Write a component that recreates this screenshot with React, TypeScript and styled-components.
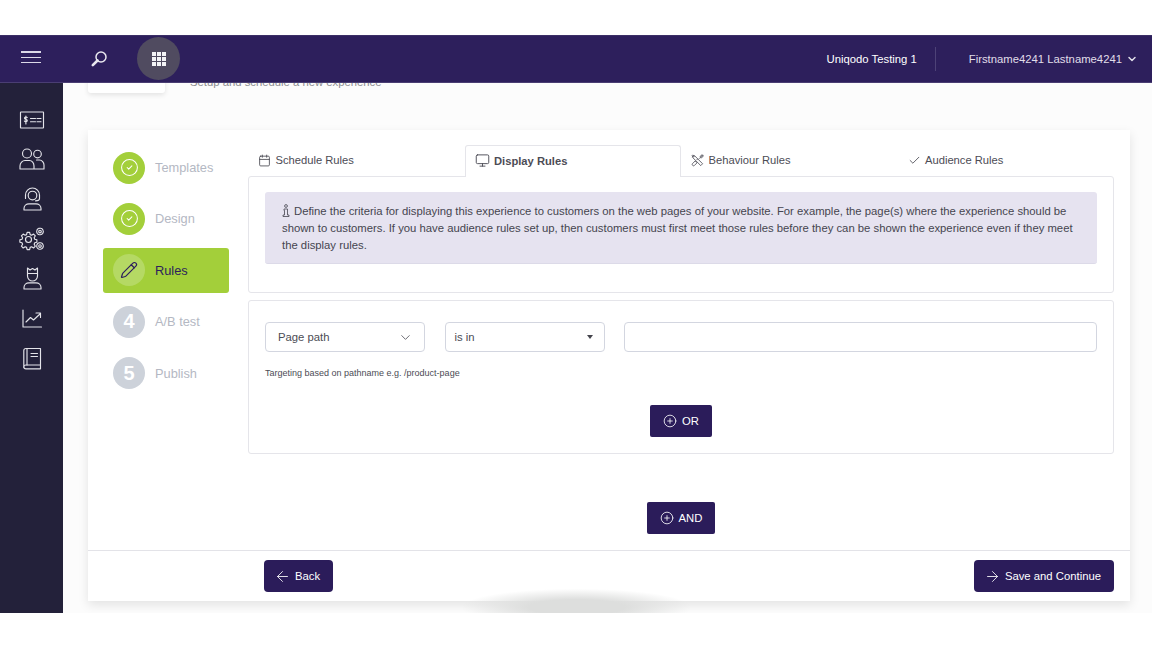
import React from 'react';
import styled, { createGlobalStyle } from 'styled-components';
import {
    ArrowLeft,
    ArrowRight,
    Calendar,
    Check,
    ChevronDown,
    CircleCheck,
    CirclePlus,
    Monitor,
    Pencil,
} from 'lucide-react';

const GlobalStyle = createGlobalStyle`
    html, body {
        margin: 0;
        padding: 0;
        background: #fff;
    }
    body {
        font-family: "Liberation Sans", Arial, sans-serif;
        overflow: hidden;
    }
    * {
        box-sizing: border-box;
    }
`;

const Page = styled.div`
    width: 1152px;
    height: 648px;
    padding: 35px 0;
    background: #fff;
`;
const Shell = styled.div`
    height: 578px;
    display: flex;
    flex-direction: column;
`;
const Header = styled.header`
    height: 47.5px;
    flex: none;
    display: flex;
    align-items: center;
    background: #2d1f5c;
    border-top: 1px solid #3b2f66;
    border-bottom: 1px solid #4a3e73;
    color: #fff;
    font-size: 11.3px;
    position: relative;
    z-index: 2;
`;
const Burger = styled.div`
    width: 20px;
    margin-left: 21px;
    padding-bottom: 3px;
    display: flex;
    flex-direction: column;
    gap: 3.8px;
    > i {
        display: block;
        height: 1.5px;
        background: #dcd9e8;
    }
`;
const SearchIcon = styled.div`
    width: 20px;
    height: 20px;
    margin-left: 48px;
    color: #e9e8ef;
    display: flex;
`;
const GridButton = styled.div`
    width: 43px;
    height: 43px;
    margin-left: 28px;
    border-radius: 50%;
    background: #504b60;
    display: grid;
    grid-template-columns: repeat(3, 4px);
    grid-auto-rows: 4px;
    gap: 1px;
    justify-content: center;
    align-content: center;
    > i {
        display: block;
        background: #f4f4f6;
    }
`;
const HeaderRight = styled.div`
    margin-left: auto;
    display: flex;
    align-items: center;
    padding-right: 14px;
    color: #e0dee9;
`;
const Account = styled.span`
    color: #fff;
    padding-right: 18px;
    border-right: 1px solid #4d4277;
    line-height: 24px;
    margin-right: 33px;
`;
const UserChevron = styled(ChevronDown)`
    margin-left: 4px;
`;
const Body = styled.div`
    flex: 1;
    min-height: 0;
    display: flex;
`;
const Sidebar = styled.nav`
    width: 63px;
    flex: none;
    background: #23213a;
    padding-top: 24px;
    display: flex;
    flex-direction: column;
    align-items: center;
    gap: 13.7px;
    color: #e4e4ea;
`;
const Main = styled.main`
    flex: 1;
    min-width: 0;
    overflow: hidden;
    display: flex;
    flex-direction: column;
    justify-content: flex-end;
    padding: 0 22px 12px 25px;
    background: #fcfcfc;
`;
const TitleRow = styled.div`
    flex: none;
    display: flex;
    align-items: flex-end;
    gap: 25px;
    margin-bottom: 37px;
`;
const GhostButton = styled.div`
    width: 77px;
    height: 40px;
    background: #fff;
    border-radius: 3px;
    box-shadow: 0 2px 5px rgba(0, 0, 0, 0.1);
`;
const Subtitle = styled.div`
    font-size: 11.3px;
    line-height: 14px;
    padding-bottom: 4px;
    color: #8d8d92;
`;
const Card = styled.section`
    flex: none;
    height: 471px;
    background: #fff;
    box-shadow: 0 4px 10px rgba(0, 0, 0, 0.1);
    display: flex;
    flex-direction: column;
    position: relative;
    &::after {
        content: '';
        position: absolute;
        left: 375px;
        bottom: -16px;
        width: 227px;
        height: 28px;
        background: radial-gradient(ellipse at 50% 65%, #dddedd 30%, rgba(232, 233, 232, 0) 72%);
        pointer-events: none;
    }
`;
const CardBody = styled.div`
    flex: 1;
    min-height: 0;
    display: flex;
`;
const Steps = styled.ol`
    width: 160px;
    flex: none;
    margin: 0;
    padding: 15px 19px 0 15px;
    list-style: none;
    display: flex;
    flex-direction: column;
    gap: 6.4px;
`;
const Step = styled.li<{ $active?: boolean }>`
    height: 45px;
    display: flex;
    align-items: center;
    gap: 10px;
    padding-left: 10px;
    border-radius: 3px;
    font-size: 12.8px;
    background: ${(p) => (p.$active ? '#a3cf3a' : 'transparent')};
    color: ${(p) => (p.$active ? '#2d1f5c' : '#b4b8c3')};
`;
const StepCircle = styled.span<{ $tone: 'done' | 'current' | 'todo' }>`
    width: 32px;
    height: 32px;
    flex: none;
    border-radius: 50%;
    display: flex;
    align-items: center;
    justify-content: center;
    font-size: 20px;
    font-weight: 700;
    color: ${(p) => (p.$tone === 'current' ? '#2d1f5c' : '#fff')};
    background: ${(p) =>
        p.$tone === 'done'
            ? '#a3cf3a'
            : p.$tone === 'current'
              ? '#b5d964'
              : '#cdd2da'};
`;
const Content = styled.div`
    flex: 1;
    min-width: 0;
    padding: 15px 16px 0 0;
    display: flex;
    flex-direction: column;
    align-items: stretch;
`;
const Tabs = styled.div`
    height: 31px;
    flex: none;
    display: grid;
    grid-template-columns: repeat(4, 1fr);
`;
const Tab = styled.div<{ $active?: boolean }>`
    display: flex;
    align-items: center;
    gap: 4.5px;
    padding: 0 0 2px 9px;
    font-size: 11.2px;
    color: #4c4c55;
    border: 1px solid ${(p) => (p.$active ? '#e5e5ea' : 'transparent')};
    border-bottom: none;
    border-radius: 3px 3px 0 0;
    font-weight: ${(p) => (p.$active ? 700 : 400)};
    background: #fff;
    position: relative;
    z-index: 1;
    margin-bottom: ${(p) => (p.$active ? '-1px' : '0')};
`;
const Panel = styled.div<{ $tall?: boolean }>`
    border: 1px solid #e5e5ea;
    border-radius: 3px;
    height: ${(p) => (p.$tall ? '154px' : '117px')};
    padding: ${(p) => (p.$tall ? '21px' : '15px')} 16px 0;
    flex: none;
`;
const Alert = styled.div`
    height: 72px;
    padding: 11px 12px 0 17px;
    background: #e6e3f0;
    border-radius: 3px;
    border-bottom: 1px solid #dcdae8;
    font-size: 11.3px;
    line-height: 17px;
    color: #45454f;
`;
const InfoMark = styled.svg`
    width: 8px;
    height: 13px;
    margin-right: 4px;
    vertical-align: -2px;
`;
const Fields = styled.div`
    display: grid;
    grid-template-columns: 160px 160px 1fr;
    gap: 19.5px;
`;
const SelectBox = styled.div<{ $inset?: boolean }>`
    height: 30px;
    display: flex;
    align-items: center;
    justify-content: space-between;
    padding: 0 11px 0 ${(p) => (p.$inset ? '12px' : '9px')};
    border: 1px solid #d3d6e0;
    border-radius: 4px;
    background: #fff;
    font-size: 11.3px;
    color: #4c4c55;
`;
const Caret = styled.span`
    width: 0;
    height: 0;
    border-left: 3.5px solid transparent;
    border-right: 3.5px solid transparent;
    border-top: 4px solid #44444c;
`;
const TextField = styled.input`
    height: 30px;
    width: 100%;
    border: 1px solid #d3d6e0;
    border-radius: 4px;
    background: #fff;
    outline: none;
`;
const Hint = styled.div`
    margin-top: 15px;
    font-size: 9px;
    line-height: 12px;
    color: #4c4c55;
`;
const ButtonRow = styled.div<{ $gap: number }>`
    display: flex;
    justify-content: center;
    margin-top: ${(p) => p.$gap}px;
`;
const PrimaryButton = styled.button<{ $round?: boolean }>`
    height: 32px;
    padding: 0 13px;
    display: inline-flex;
    align-items: center;
    gap: 5px;
    border: none;
    border-radius: ${(p) => (p.$round ? '4px' : '2px')};
    background: #2b1c5a;
    color: #fff;
    font-family: inherit;
    font-size: 11.3px;
`;
const BackArrow = styled(ArrowLeft)`
    margin: 0 -1px 0 -3px;
`;
const NextArrow = styled(ArrowRight)`
    margin: 0 -1px 0 -3px;
`;
const Gap = styled.div`
    height: 7px;
    flex: none;
`;
const Footer = styled.footer`
    height: 51px;
    flex: none;
    border-top: 1px solid #e3e3e8;
    display: flex;
    align-items: flex-start;
    justify-content: space-between;
    padding: 9px 16px 0 176px;
`;

const iconProps = {
    width: 26,
    height: 26,
    viewBox: '0 0 26 26',
    fill: 'none',
    stroke: 'currentColor',
    strokeWidth: 1.15,
    strokeLinecap: 'round' as const,
    strokeLinejoin: 'round' as const,
};

const navIcons = [
    <svg key="ticket" {...iconProps}>
        <rect x="1.500" y="5" width="23" height="16" rx="0.500" />
        <path d="M8.200 10.500c-.5-.8-2.700-.8-2.700.7 0 1.500 2.800.8 2.800 2.300 0 1.500-2.500 1.400-2.900.6M6.900 9v8" />
        <path d="M11.500 11.500h5M18 11.500h4M11.500 14.700h5M18 14.700h4" />
    </svg>,
    <svg key="users" {...iconProps}>
        <circle cx="8" cy="7.500" r="4.500" />
        <circle cx="18.500" cy="8" r="3.800" />
        <path d="M1 23v-3c0-3 2.500-5.500 5-5.500h4.500c2.500 0 4.500 2.500 4.500 5.500v3zM17.500 14h3c2.500 0 4.500 2.500 4.500 5v4h-9.500" />
    </svg>,
    <svg key="agent" {...iconProps}>
        <circle cx="13.500" cy="9.500" r="4.300" />
        <path d="M6.500 12.500V9a7 7 0 0 1 14 0v3.500c0 1.200-1.500 2.300-4 2.300" />
        <path d="M5 24v-1.500c0-2.700 2.300-4.700 5-4.700h7c2.700 0 5 2 5 4.700V24z" />
    </svg>,
    <svg key="gears" {...iconProps}>
        <circle cx="9.500" cy="13.500" r="3" />
        <path d="M8 4.500h3l.6 2.600 1.700.7 2.300-1.400 2.100 2.100-1.400 2.300.7 1.700 2.500.6v3l-2.500.6-.7 1.700 1.400 2.300-2.100 2.100-2.300-1.400-1.700.7-.6 2.600H8l-.6-2.600-1.700-.7-2.300 1.400-2.100-2.100 1.400-2.300-.7-1.700-2.500-.6v-3l2.500-.6.7-1.700-1.400-2.300 2.100-2.100 2.300 1.400 1.700-.7z" transform="translate(1.300 2.600) scale(.85)" strokeWidth="1.350" />
        <circle cx="21" cy="5.500" r="3.300" strokeDasharray="2 .8" />
        <circle cx="21" cy="5.500" r="1.300" />
        <circle cx="21" cy="20" r="3.300" strokeDasharray="2 .8" />
        <circle cx="21" cy="20" r="1.300" />
    </svg>,
    <svg key="officer" {...iconProps}>
        <path d="M8.500 3l2.500 2 2.500-1.500 2.500 1.500 2.500-2v5.500h-10z" />
        <path d="M8.500 8.500V11a5 5 0 0 0 10 0V8.500" />
        <path d="M5 24v-1.500c0-2.700 2.300-4.700 5-4.700h7c2.700 0 5 2 5 4.700V24z" />
    </svg>,
    <svg key="chart" {...iconProps}>
        <path d="M4 5v17h18.500" />
        <path d="M7 17l4.500-4.500 3 2.500 6.500-6M17 8h4.500v4.500" />
    </svg>,
    <svg key="book" {...iconProps}>
        <path d="M7 3.500h14.500v16.500H7c-1.300 0-2.200.8-2.200 2V5.500c0-1 .9-2 2.200-2z" />
        <path d="M4.800 22c0 1 .9 1.800 2.200 1.800h14.500V20M8 3.500V20M12 8.500h6.500M12 11.500h6.500" />
    </svg>,
];

const steps = [
    { label: 'Templates', tone: 'done' },
    { label: 'Design', tone: 'done' },
    { label: 'Rules', tone: 'current' },
    { label: 'A/B test', tone: 'todo', num: 4 },
    { label: 'Publish', tone: 'todo', num: 5 },
] as const;

const ToolsIcon = () => (
    <svg width="13" height="13" viewBox="0 0 14 14" fill="none" stroke="currentColor" strokeWidth="0.9">
        <path d="M1.500 3.500l2-2 9 9-2 2zM2 1l-1 1 1.500 1.500 1-1zM9 5l1-1c-.5-1.500.5-3 2.500-3L11 2.500 11.500 3l1.500-1.500c0 2-1.500 3-3 2.500" />
        <path d="M1.500 10.500l3-3 2 2-3 3c-1 1-3-1-2-2zM7.500 5l-1.500 1.500" />
    </svg>
);

const App = () => {
    return (
        <Page>
            <GlobalStyle />
            <Shell>
                <Header>
                    <Burger>
                        <i />
                        <i />
                        <i />
                    </Burger>
                    <SearchIcon>
                        <svg width="20" height="20" viewBox="0 0 20 20" fill="none" stroke="currentColor">
                            <circle cx="12" cy="8" r="5" strokeWidth="1.500" />
                            <path d="M8.500 11.500L3.800 16.200" strokeWidth="2.600" strokeLinecap="round" />
                        </svg>
                    </SearchIcon>
                    <GridButton>
                        {Array.from({ length: 9 }).map((_, i) => (
                            <i key={i} />
                        ))}
                    </GridButton>
                    <HeaderRight>
                        <Account>Uniqodo Testing 1</Account>
                        <span>Firstname4241 Lastname4241</span>
                        <UserChevron size={12} strokeWidth={3} />
                    </HeaderRight>
                </Header>
                <Body>
                    <Sidebar>{navIcons}</Sidebar>
                    <Main>
                        <TitleRow>
                            <GhostButton />
                            <Subtitle>Setup and schedule a new experience</Subtitle>
                        </TitleRow>
                        <Card>
                            <CardBody>
                                <Steps>
                                    {steps.map((step) => (
                                        <Step key={step.label} $active={step.tone === 'current'}>
                                            <StepCircle $tone={step.tone}>
                                                {step.tone === 'done' && <CircleCheck size={19} strokeWidth={1.3} />}
                                                {step.tone === 'current' && <Pencil size={18} strokeWidth={1.6} />}
                                                {step.tone === 'todo' && step.num}
                                            </StepCircle>
                                            {step.label}
                                        </Step>
                                    ))}
                                </Steps>
                                <Content>
                                    <Tabs>
                                        <Tab>
                                            <Calendar size={13} strokeWidth={1.6} />
                                            Schedule Rules
                                        </Tab>
                                        <Tab $active>
                                            <Monitor size={15} strokeWidth={1.5} />
                                            Display Rules
                                        </Tab>
                                        <Tab>
                                            <ToolsIcon />
                                            Behaviour Rules
                                        </Tab>
                                        <Tab>
                                            <Check size={13} strokeWidth={1.6} />
                                            Audience Rules
                                        </Tab>
                                    </Tabs>
                                    <Panel>
                                        <Alert>
                                            <InfoMark viewBox="0 0 8 13" fill="none" stroke="currentColor" strokeWidth="0.8">
                                                <circle cx="4" cy="2" r="1.400" />
                                                <path d="M2 5h3.500v6H7v1.500H1V11h1.500V6.500H2z" />
                                            </InfoMark>
                                            Define the criteria for displaying this experience to customers on the web pages of your website. For example, the page(s) where the experience should be shown to customers. If you have audience rules set up, then customers must first meet those rules before they can be shown the experience even if they meet the display rules.
                                        </Alert>
                                    </Panel>
                                    <Gap />
                                    <Panel $tall>
                                        <Fields>
                                            <SelectBox $inset>
                                                Page path
                                                <ChevronDown size={15} strokeWidth={1.3} />
                                            </SelectBox>
                                            <SelectBox>
                                                is in
                                                <Caret />
                                            </SelectBox>
                                            <TextField />
                                        </Fields>
                                        <Hint>Targeting based on pathname e.g. /product-page</Hint>
                                        <ButtonRow $gap={26}>
                                            <PrimaryButton>
                                                <CirclePlus size={14} strokeWidth={1.4} />
                                                OR
                                            </PrimaryButton>
                                        </ButtonRow>
                                    </Panel>
                                    <ButtonRow $gap={48}>
                                        <PrimaryButton>
                                            <CirclePlus size={14} strokeWidth={1.4} />
                                            AND
                                        </PrimaryButton>
                                    </ButtonRow>
                                </Content>
                            </CardBody>
                            <Footer>
                                <PrimaryButton $round>
                                    <BackArrow size={17} strokeWidth={1.2} />
                                    Back
                                </PrimaryButton>
                                <PrimaryButton $round>
                                    <NextArrow size={17} strokeWidth={1.2} />
                                    Save and Continue
                                </PrimaryButton>
                            </Footer>
                        </Card>
                    </Main>
                </Body>
            </Shell>
        </Page>
    );
};

export default App;
